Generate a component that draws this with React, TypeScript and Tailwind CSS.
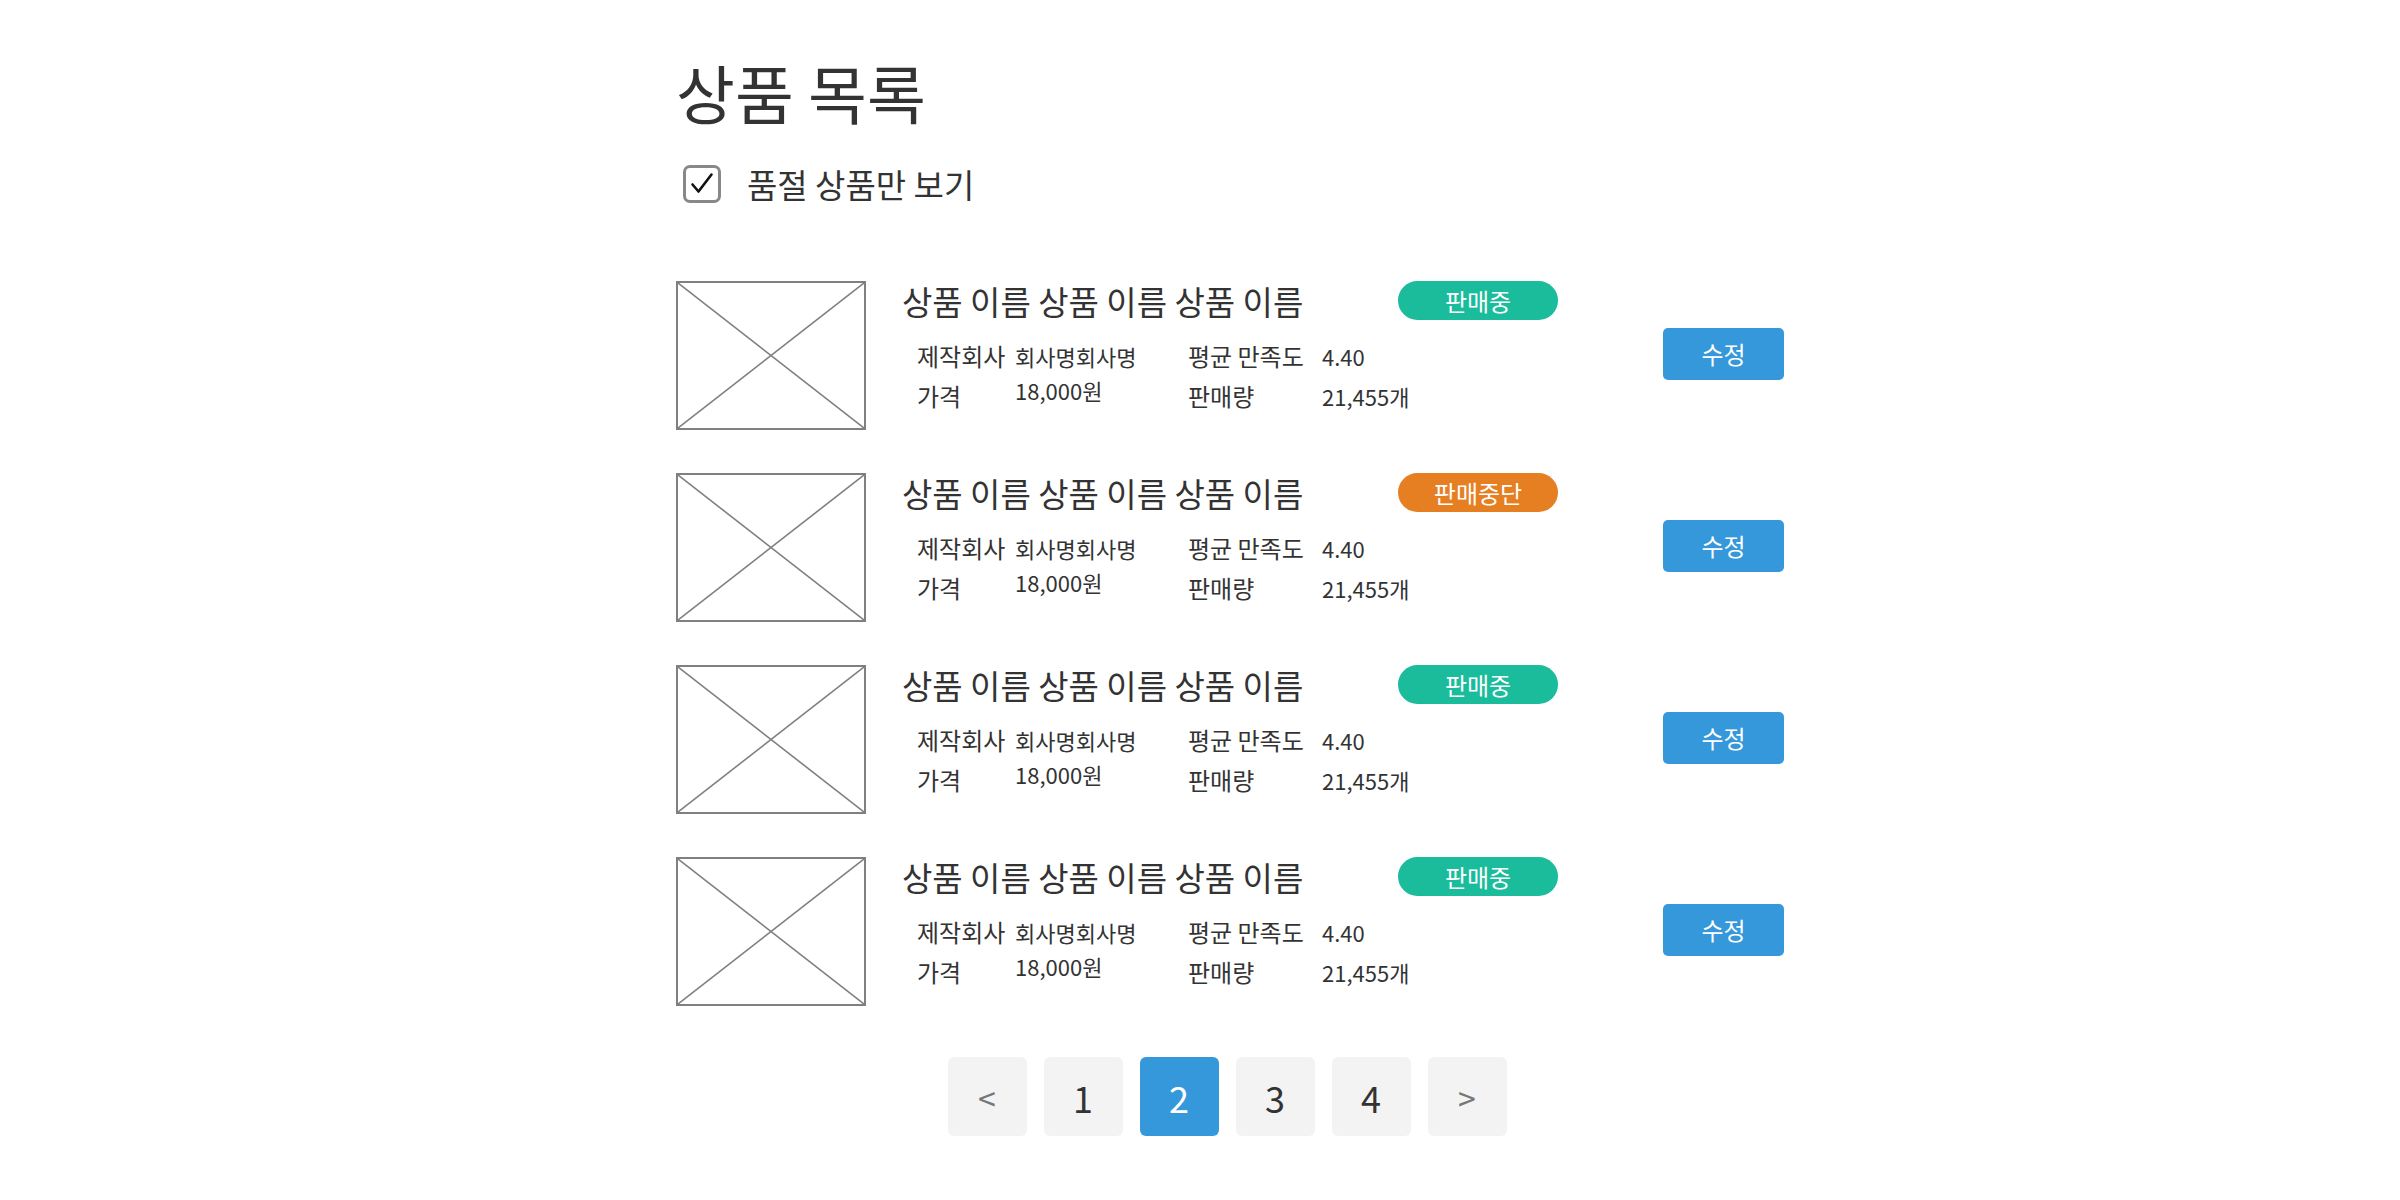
type Product = {
  id: number;
  name: string;
  onSale: boolean;
};

const products: Product[] = [
  { id: 1, name: '상품 이름 상품 이름 상품 이름', onSale: true },
  { id: 2, name: '상품 이름 상품 이름 상품 이름', onSale: false },
  { id: 3, name: '상품 이름 상품 이름 상품 이름', onSale: true },
  { id: 4, name: '상품 이름 상품 이름 상품 이름', onSale: true },
];

const Placeholder = () => (
  <div className="w-[190px] h-[149px] border-2 border-[#808080] shrink-0">
    <svg width="100%" height="100%" viewBox="0 0 186 145" preserveAspectRatio="none">
      <line x1="0" y1="0" x2="186" y2="145" stroke="#808080" strokeWidth="1.6" />
      <line x1="186" y1="0" x2="0" y2="145" stroke="#808080" strokeWidth="1.6" />
    </svg>
  </div>
);

const ProductRow = ({ product }: { product: Product }) => (
  <li className="flex items-start">
    <Placeholder />
    <div className="ml-[36px] w-[656px]">
      <div className="flex justify-between items-start">
        <span className="text-[33px] leading-[40px]">{product.name}</span>
        {product.onSale ? (
          <span className="w-[160px] h-[39px] rounded-full bg-[#1abc9c] text-white text-[24px] flex items-center justify-center">
            판매중
          </span>
        ) : (
          <span className="w-[160px] h-[39px] rounded-full bg-[#e67e22] text-white text-[24px] flex items-center justify-center">
            판매중단
          </span>
        )}
      </div>
      <div className="flex pl-[15px] mt-[15px]">
        <div className="flex w-[271px]">
          <div className="w-[98px] text-[24px] leading-[40px]">
            <div>제작회사</div>
            <div>가격</div>
          </div>
          <div className="text-[22px] leading-[34px] pt-[3px]">
            <div>회사명회사명</div>
            <div>18,000원</div>
          </div>
        </div>
        <div className="flex">
          <div className="w-[134px] text-[24px] leading-[40px]">
            <div>평균 만족도</div>
            <div>판매량</div>
          </div>
          <div className="text-[22px] leading-[40px]">
            <div>4.40</div>
            <div>21,455개</div>
          </div>
        </div>
      </div>
    </div>
    <button className="ml-[105px] self-center -mt-[3px] w-[121px] h-[52px] rounded-[5px] bg-[#3498db] text-white text-[24px]">
      수정
    </button>
  </li>
);

export default function App() {
  const pages = ['<', '1', '2', '3', '4', '>'];
  return (
    <div
      className="min-h-screen bg-white text-[#333333]"
      style={{ fontFamily: '"Noto Sans CJK KR", "Noto Sans", sans-serif' }}
    >
      <div className="ml-[676px] w-[1108px] pt-[53px]">
        <h1 className="text-[64px] leading-[76px] font-normal">상품 목록</h1>

        <label className="flex items-center mt-[35px] ml-[7px]">
          <span className="w-[38px] h-[38px] rounded-[7px] border-[3px] border-[#888888] flex items-center justify-center">
            <svg width="28" height="28" viewBox="0 0 28 28" fill="none">
              <path d="M4.5 14.5 L10.5 21.5 L23.5 4.5" stroke="#111111" strokeWidth="2.6" strokeLinecap="round" strokeLinejoin="round" />
            </svg>
          </span>
          <span className="ml-[26px] text-[33px] leading-[40px]">품절 상품만 보기</span>
        </label>

        <ul className="mt-[77px] flex flex-col gap-[43px]">
          {products.map(p => (
            <ProductRow key={p.id} product={p} />
          ))}
        </ul>

        <div className="flex justify-center gap-[17px] mt-[51px] pr-[6px]">
          {pages.map((p, i) => (
            <button
              key={i}
              className={
                p === '2'
                  ? 'w-[79px] h-[79px] rounded-[6px] bg-[#3498db] text-white text-[36px]'
                  : p === '<' || p === '>'
                  ? 'w-[79px] h-[79px] rounded-[6px] bg-[#f3f3f3] text-[#777777] text-[32px]'
                  : 'w-[79px] h-[79px] rounded-[6px] bg-[#f3f3f3] text-[#333333] text-[36px]'
              }
            >
              {p}
            </button>
          ))}
        </div>
      </div>
    </div>
  );
}
